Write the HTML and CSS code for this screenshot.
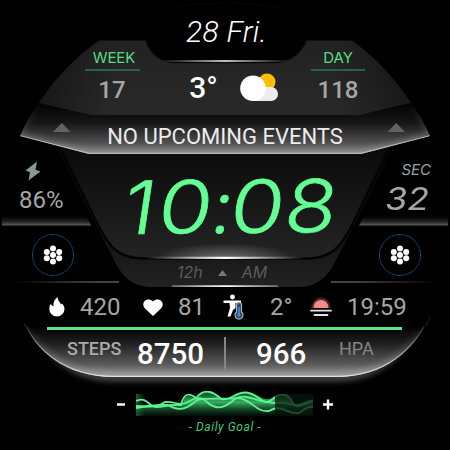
FILE: index.html
```html
<!DOCTYPE html>
<html lang="en">
<head>
<meta charset="utf-8">
<title>Watch face</title>
<link rel="stylesheet" href="styles.css">
</head>
<body>
<main class="face">
  <svg class="backdrop" viewBox="0 0 450 450" aria-hidden="true">
    <defs>
      <linearGradient id="panel" x1="0" y1="0" x2="0" y2="1"><stop offset="0" stop-color="#222"/><stop offset="1" stop-color="#292929"/></linearGradient>
      <linearGradient id="panelShade"><stop offset="0" stop-color="#000" stop-opacity=".4"/><stop offset=".2" stop-color="#000" stop-opacity="0"/><stop offset=".8" stop-color="#000" stop-opacity="0"/><stop offset="1" stop-color="#000" stop-opacity=".4"/></linearGradient>
      <linearGradient id="band" gradientUnits="userSpaceOnUse" x1="0" y1="106" x2="0" y2="154"><stop offset="0" stop-color="#050505"/><stop offset=".35" stop-color="#161616"/><stop offset=".75" stop-color="#4c4c4c"/><stop offset="1" stop-color="#8a8a8a"/></linearGradient>
      <linearGradient id="bowl" x1="0" y1="0" x2="0" y2="1"><stop offset="0" stop-color="#0a0a0a"/><stop offset=".6" stop-color="#191919"/><stop offset="1" stop-color="#242424"/></linearGradient>
      <linearGradient id="rim" x1="0" y1="0" x2="0" y2="1"><stop offset="0" stop-color="#030303"/><stop offset=".6" stop-color="#111"/><stop offset="1" stop-color="#222"/></linearGradient>
      <linearGradient id="shine"><stop offset="0" stop-color="#fff" stop-opacity="0"/><stop offset=".5" stop-color="#fff"/><stop offset="1" stop-color="#fff" stop-opacity="0"/></linearGradient>
      <linearGradient id="hair"><stop offset="0" stop-color="#888" stop-opacity="0"/><stop offset=".2" stop-color="#888"/><stop offset=".8" stop-color="#888"/><stop offset="1" stop-color="#888" stop-opacity="0"/></linearGradient>
      <linearGradient id="ledge" x1="0" y1="0" x2="0" y2="1"><stop offset="0" stop-color="#000"/><stop offset=".6" stop-color="#222"/><stop offset="1" stop-color="#606060"/></linearGradient>
      <linearGradient id="tray" gradientUnits="userSpaceOnUse" x1="0" y1="326" x2="0" y2="377"><stop offset="0" stop-color="#000"/><stop offset=".35" stop-color="#202020"/><stop offset=".75" stop-color="#5a5a5a"/><stop offset="1" stop-color="#9a9a9a"/></linearGradient>
      <linearGradient id="trayEdge" gradientUnits="userSpaceOnUse" x1="0" y1="316" x2="0" y2="377"><stop offset="0" stop-color="#777" stop-opacity=".1"/><stop offset=".5" stop-color="#aaa" stop-opacity=".7"/><stop offset="1" stop-color="#e4e4e4"/></linearGradient>
      <linearGradient id="trayGlow" gradientUnits="userSpaceOnUse" x1="0" y1="325" x2="0" y2="377"><stop offset="0" stop-color="#aaa" stop-opacity="0"/><stop offset="1" stop-color="#aaa"/></linearGradient>
      <linearGradient id="arcGlow" gradientUnits="userSpaceOnUse" x1="0" y1="103" x2="0" y2="140"><stop offset="0" stop-color="#aaa" stop-opacity="0"/><stop offset="1" stop-color="#aaa"/></linearGradient>
      <radialGradient id="halo"><stop offset="0" stop-color="#fff" stop-opacity=".35"/><stop offset="1" stop-color="#fff" stop-opacity="0"/></radialGradient>
      <filter id="soft" filterUnits="userSpaceOnUse" x="0" y="0" width="450" height="450"><feGaussianBlur stdDeviation="3"/></filter>
      <clipPath id="bandClip"><path d="M39 103 90 115H360L411 103Q423 119 430 136L361 154H89L20 136Q27 119 39 103Z"/></clipPath>
      <clipPath id="trayClip"><path d="M24 322C35 350 65 377 114 377H336C385 377 415 350 430 316V326H24Z"/></clipPath>
      <clipPath id="bowlClip"><path d="M55 145 95 225C106 246 117 258 141 258H309C333 258 344 246 355 225L395 145Z"/></clipPath>
    </defs>
    <path d="M171 8Q225-3 279 8" fill="none" stroke="#080808"/>
    <path d="M55 145 113 258Q126 287 150 287H300Q324 287 337 258L395 145Z" fill="url(#rim)"/>
    <path d="M59 145 98 225C109 247 119 258.500 143 258.500H307C331 258.500 341 247 352 225L391 145Z" fill="url(#bowl)" stroke="#030303" stroke-width="2.400"/>
    <g clip-path="url(#bowlClip)"><ellipse cx="225" cy="259" rx="70" ry="16" fill="url(#halo)"/></g>
    <path d="M145 256.800H305V259H145ZM172 285.200H278V287H172Z" fill="url(#shine)"/>
    <path d="M99 40.500H146C150 53 160 62 175 62H275C290 62 301 53 306 40.500H352Q387 66 411 103L360 115H90L39 103Q63 66 99 40.500Z" fill="url(#panel)"/>
    <path d="M99 40.500H146C150 53 160 62 175 62H275C290 62 301 53 306 40.500H352Q387 66 411 103L360 115H90L39 103Q63 66 99 40.500Z" fill="url(#panelShade)"/>
    <path d="M146 40.500C150 53 160 62.500 175 62.500H275C290 62.500 301 53 306 40.500" fill="none" stroke="#080808" stroke-width="1.500"/>
    <path d="M160 60.200H290V61.700H160Z" fill="url(#shine)"/>
    <path d="M39 103 90 115H360L411 103Q423 119 430 136L361 154H89L20 136Q27 119 39 103Z" fill="url(#band)"/>
    <g clip-path="url(#bandClip)" fill="none">
      <path d="M39 103Q27 119 20 136M430 136Q423 119 411 103" stroke="url(#arcGlow)" stroke-width="4" opacity=".4" filter="url(#soft)"/>
      <path d="M20 137 89 155H361L430 137" stroke="#aaa" stroke-width="7" opacity=".5" filter="url(#soft)"/>
      <path d="M20 136 89 153.500H361L430 136" stroke="#b8b8b8" stroke-width="1.500"/>
    </g>
    <path d="M53 132 61.800 123 70.500 132ZM387.500 132 396.200 123 405 132Z" fill="#626262"/>
    <path d="M2 216H86L91 225.500H2ZM448 216H364L359 225.500H448Z" fill="url(#ledge)"/>
    <path d="M13 281.500H119V282.600H13ZM331 281.500H437V282.600H331Z" fill="url(#hair)"/>
    <path d="M50 352C68 370 88 378 114 378H336C362 378 382 370 400 352" fill="none" stroke="url(#trayGlow)" stroke-width="5" opacity=".6" filter="url(#soft)"/>
    <path d="M24 322C35 350 65 377 114 377H336C385 377 415 350 430 316V326H24Z" fill="url(#tray)"/>
    <g clip-path="url(#trayClip)" fill="none">
      <path d="M24 322C35 350 65 377 114 377H336C385 377 415 350 430 316" stroke="url(#trayGlow)" stroke-width="8" opacity=".6" filter="url(#soft)"/>
      <path d="M24 322C35 350 65 377 114 377H336C385 377 415 350 430 316" stroke="url(#trayEdge)" stroke-width="2.500"/>
    </g>
  </svg>

  <header class="date">28 Fri.</header>

  <section class="summary">
    <div class="counter"><span class="label week">WEEK</span><b class="count">17</b></div>
    <div class="weather">
      <span class="temp">3°</span>
      <svg width="40" height="30" viewBox="0 0 40 30"><circle cx="27" cy="9" r="8.500" fill="#ffbd08"/><path d="M14 28V14H31a7 7 0 0 1 0 14Z" fill="#ececec"/><path d="M13 2.500a12.800 12.800 0 1 1 0 25.600a12.800 12.800 0 0 1 0-25.600Z" fill="#fff"/></svg>
    </div>
    <div class="counter"><span class="label day">DAY</span><b class="count">118</b></div>
  </section>

  <section class="events"><span>NO UPCOMING EVENTS</span></section>

  <section class="middle">
    <div class="side battery">
      <svg class="bolt" width="18" height="20" viewBox="0 0 18 20"><path d="M13 .500 1.500 9.500 6 11.200 4.500 19.500 16.500 10.500 11.500 8.800Z" fill="#87999b"/></svg>
      <span class="percent">86%</span>
      <svg class="ring" width="44" height="44" viewBox="0 0 44 44"><circle cx="22" cy="22" r="20.500" fill="none" stroke="#1769b5" stroke-width="1" stroke-dasharray="1.500 .8"/><g fill="#fff"><circle cx="22" cy="22" r="3"/><circle cx="22" cy="15.600" r="3"/><circle cx="22" cy="28.400" r="3"/><circle cx="15.800" cy="18.900" r="3"/><circle cx="15.800" cy="25.300" r="3"/><circle cx="28.200" cy="18.900" r="3"/><circle cx="28.200" cy="25.300" r="3"/></g></svg>
    </div>
    <div class="clock">
      <div class="time"><span class="one">1</span><span class="zero">0</span><span class="colon">:</span><span class="zero">0</span><span class="eight">8</span></div>
      <div class="mode"><span class="hours">12h</span><svg width="9" height="6" viewBox="0 0 9 6"><path d="M0 6 4.500 0 9 6Z" fill="#777"/></svg><span class="ampm">AM</span></div>
    </div>
    <div class="side seconds">
      <span class="sec-label">SEC</span>
      <span class="sec">32</span>
      <svg class="ring" width="44" height="44" viewBox="0 0 44 44"><circle cx="22" cy="22" r="20.500" fill="none" stroke="#1769b5" stroke-width="1" stroke-dasharray="1.500 .8"/><g fill="#fff"><circle cx="22" cy="22" r="3"/><circle cx="22" cy="15.600" r="3"/><circle cx="22" cy="28.400" r="3"/><circle cx="15.800" cy="18.900" r="3"/><circle cx="15.800" cy="25.300" r="3"/><circle cx="28.200" cy="18.900" r="3"/><circle cx="28.200" cy="25.300" r="3"/></g></svg>
    </div>
  </section>

  <section class="stats">
    <svg width="16" height="20" viewBox="0 0 16 20"><path d="M8.500 0C9 4 11 5 12 7.500L13 6.500C14.500 8 15.500 10 15.500 12A7.600 7.600 0 0 1 .300 12C.300 9.500 1 8 2 7C2.500 8.500 3.500 9 4.500 9C4 5 6 2 8.500 0Z" fill="#fff"/></svg>
    <span>420</span>
    <svg width="20" height="17" viewBox="0 0 20 17"><path d="M10 17 2 9.500C-3 4 4-3 10 2.500C16-3 23 4 18 9.500Z" fill="#fff"/></svg>
    <span>81</span>
    <svg width="21" height="26" viewBox="0 0 21 26"><circle cx="9.500" cy="3" r="2.400" fill="#fff"/><path d="M.500 6.500H18V9H12.500V14L10 16 7.500 22.500H4.500L7 14 6.500 9H.500Z" fill="#fff"/><path d="M13.500 18V11a2.500 2.500 0 0 1 5 0V18a4 4 0 1 1-5 0Z" fill="#34435a" stroke="#aab2ba" stroke-width="1.200"/><path d="M16 13V21" stroke="#4389ec" stroke-width="1.700"/><circle cx="16" cy="21" r="1.700" fill="#4389ec"/></svg>
    <span>2°</span>
    <svg width="22" height="20" viewBox="0 0 22 20"><path d="M1.500 11a9.500 10.500 0 0 1 19 0Z" fill="#863b3b" opacity=".6"/><path d="M3.500 11a7.500 8 0 0 1 15 0Z" fill="#f18b87"/><path d="M1 13.700H21M4.500 18H17.500" stroke="#e2e2e2" stroke-width="1.800" stroke-linecap="round"/></svg>
    <span>19:59</span>
  </section>
  <div class="rule"></div>

  <section class="totals">
    <span class="unit steps">STEPS</span><b>8750</b><i class="divider"></i><b>966</b><span class="unit hpa">HPA</span>
  </section>

  <section class="goal">
    <svg width="10" height="26" viewBox="0 0 10 26"><path d="M1 13.500H9" stroke="#fff" stroke-width="2.400"/></svg>
    <svg class="wave" width="177" height="28" viewBox="0 0 177 28">
      <defs><linearGradient id="fill" gradientUnits="userSpaceOnUse" x1="0" y1="4" x2="0" y2="25"><stop offset="0" stop-color="#4be583" stop-opacity=".4"/><stop offset=".35" stop-color="#4be583" stop-opacity=".75"/><stop offset="1" stop-color="#0b2817" stop-opacity=".3"/></linearGradient>
      <linearGradient id="end"><stop offset="0" stop-color="#4be583" stop-opacity=".8"/><stop offset="1" stop-color="#4be583" stop-opacity="0"/></linearGradient>
      <clipPath id="done"><path d="M0 0H139V28H0Z"/></clipPath><clipPath id="left"><path d="M139 0H177V28H139Z"/></clipPath>
      <g id="waves"><path d="M0 17C15 14 19 17 34 13L47 13C48 2 54 4 60 7C68-2 76 0 83 7C93 11 100 1 113 2C125 3 127 12 138 6C148 1 153 4 158 14L177 11V25H0Z" fill="url(#fill)"/><g fill="none" stroke="#5bf58f" stroke-width="1.800"><path d="M0 10C13 5 11 16 20 16C28 16 32 13 45 14C48 1 54 2 60 7C68-3 77 0 85 8C93 11 99 1 110 1.500C123 2 127 18 138 7C145 1 153 3 157 12C162 20 168 11 177 10"/><path d="M0 17C14 14 19 18 29 11C38 10 42 15 50 12C60 6 66 5 72 12C83 21 92 14 99 8C111 1 120 12 139 12C151 10 158 17 165 13L177 9"/><path d="M0 15C10 16 19 13 32 14C45 22 53 16 61 9C77 6 91 9 102 7C116 8 120 22 133 20C146 12 151 24 163 22C168 19 170 15 177 16"/></g></g></defs>
      <g clip-path="url(#done)"><path d="M0 3H9V25H0Z" fill="url(#end)" opacity=".5"/><use href="#waves"/></g>
      <g clip-path="url(#left)" opacity=".32"><path d="M139 3H177V25H139Z" fill="#1b6538" opacity=".5"/><use href="#waves"/></g>
    </svg>
    <svg width="10" height="26" viewBox="0 0 10 26"><path d="M0 13.500H10M5 8.500V18.500" stroke="#fff" stroke-width="2.400"/></svg>
  </section>
  <footer class="caption">- Daily Goal -</footer>
</main>
</body>
</html>
```
FILE: styles.css
```css
body { margin: 0; background: #000; }
.face {
  position: relative;
  width: 450px;
  height: 450px;
  overflow: hidden;
  display: flex;
  flex-direction: column;
  box-sizing: border-box;
  padding-top: 14px;
  color: #a6a6a6;
  background: #000;
  font-family: Roboto, sans-serif;
}
.face > * { flex: none; }
.face > :not(.backdrop) { z-index: 1; }
.backdrop { position: absolute; inset: 0; width: 450px; height: 450px; }
svg { display: block; }
b { font-weight: 500; }

.date { height: 34px; padding-left: 3px; line-height: 35px; text-align: center; font-size: 30px; font-weight: 300; font-style: italic; letter-spacing: .3px; color: #fff; }

.summary { display: grid; grid-template-columns: 54px 172px 54px; justify-content: center; height: 62px; }
.counter { text-align: center; }
.label { display: block; height: 21px; box-sizing: content-box; border-bottom: 2px solid #2b6140; font: 400 15px/19px Inter, sans-serif; color: #55dc83; }
.week { padding-left: 3px; margin-right: -1px; letter-spacing: -.1px; }
.count { display: block; margin: 0 -10px; font-size: 24px; line-height: 38px; }
.weather { display: flex; align-items: center; justify-content: center; gap: 22px; height: 44px; padding: 18px 0 0 19px; }
.temp { font-size: 30px; font-weight: 500; line-height: 46px; color: #fff; }

.events { height: 43px; margin-top: 5px; text-align: center; font-size: 22px; line-height: 43px; color: #ececec; white-space: nowrap; }
.events span { display: inline-block; }

.middle { display: grid; grid-template-columns: 110px 230px 110px; height: 132px; }
.side { display: flex; flex-direction: column; }
.bolt { margin: 3px 0 0 24px; }
.percent { margin-left: 19px; font-size: 24px; line-height: 38px; }
.battery .ring { margin: 14px 0 0 31px; }
.sec-label { margin: 0 19px 0 auto; font: italic 400 15px/24px Inter, sans-serif; color: #94a6a8; }
.sec { margin: 0 21px 0 auto; font: italic 400 31px/33px Inter, sans-serif; transform: scaleX(1.15); transform-origin: right; }
.seconds .ring { margin: 18px 0 0 38px; }
.time {
  display: flex;
  height: 98px;
  padding-left: 11px;
  font: 300 73px/98px Inter, sans-serif;
  color: #63ff95;
  -webkit-text-stroke: .7px #63ff95;
  transform: rotate(-.5deg) skewX(-9deg);
}
.time span { display: block; text-align: center; }
.one { width: 38px; transform: scaleX(1.1); }
.zero { width: 54px; transform: scaleX(1.2); }
.colon { width: 18px; }
.eight { width: 53px; transform: scaleX(1.16); }
.mode { display: flex; align-items: center; gap: 15px; height: 31px; padding: 1px 0 0 67px; font: italic 400 16px/31px Inter, sans-serif; color: #5c5c5c; }

.stats { display: grid; grid-template-columns: 31px 63px 35px 45px 47px 40px 37px 60px; align-items: center; height: 34px; padding-left: 49px; font-size: 24px; line-height: 34px; }

.rule { width: 355px; height: 2.500px; margin: 3px 0 0 47px; background: #5be584; }
.totals { display: grid; grid-template-columns: 70px 87px 32px 83px 40px; height: 48px; padding-left: 67px; align-items: center; font-size: 29.500px; color: #fff; }
.unit { margin-top: -10px; color: #939393; font-size: 18px; }
.steps { font-weight: 500; color: #aaa; }
.hpa { color: #858585; }
.divider { width: 2px; height: 34px; background: #858585; }

.goal { display: flex; justify-content: center; gap: 10px; height: 28px; margin: 13px 0 0 -1px; }
.caption { height: 18px; line-height: 17px; text-align: center; font-size: 12px; font-style: italic; letter-spacing: .6px; color: #4cc777; }
```
